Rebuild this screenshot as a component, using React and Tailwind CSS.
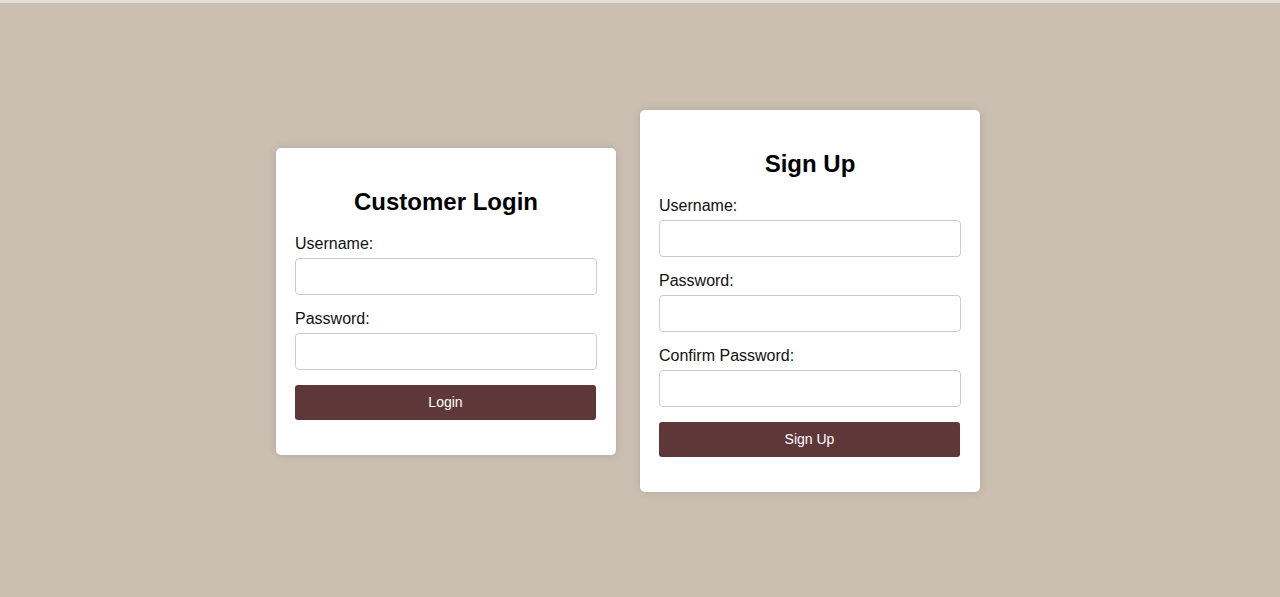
import React from 'react';

const Field = ({ label, type = 'text' }) => (
  <div className="mb-[15px]">
    <label className="block text-[16px] leading-[18px] text-[#111] mb-[5px]">{label}</label>
    <input
      type={type}
      className="block w-[302px] h-[37px] px-[10px] bg-white border border-[#ccc] rounded-[4px] outline-none"
    />
  </div>
);

const Card = ({ title, fields, button }) => (
  <div className="w-[340px] bg-white rounded-[5px] shadow-[0_0_10px_rgba(0,0,0,0.12)] px-[19px] pt-[20px] pb-[35px]">
    <h2 className="text-[24px] leading-[28px] font-bold text-black text-center mt-[20px] mb-[19px]">{title}</h2>
    {fields.map((f) => (
      <Field key={f.label} label={f.label} type={f.type} />
    ))}
    <button className="w-[301px] h-[35px] bg-[#5e3838] text-white text-[14px] rounded-[3px]">{button}</button>
  </div>
);

export default function App() {
  return (
    <div className="min-h-[597px] flex flex-col bg-[#cbbfb2] font-['Liberation_Sans',Arial,sans-serif]">
      <div className="h-[3px] bg-[#e3dfd9]" />
      <div className="flex-1 flex items-center justify-center gap-[24px] pr-[24px] pt-[2px]">
        <Card
          title="Customer Login"
          fields={[
            { label: 'Username:' },
            { label: 'Password:', type: 'password' },
          ]}
          button="Login"
        />
        <Card
          title="Sign Up"
          fields={[
            { label: 'Username:' },
            { label: 'Password:', type: 'password' },
            { label: 'Confirm Password:', type: 'password' },
          ]}
          button="Sign Up"
        />
      </div>
    </div>
  );
}
